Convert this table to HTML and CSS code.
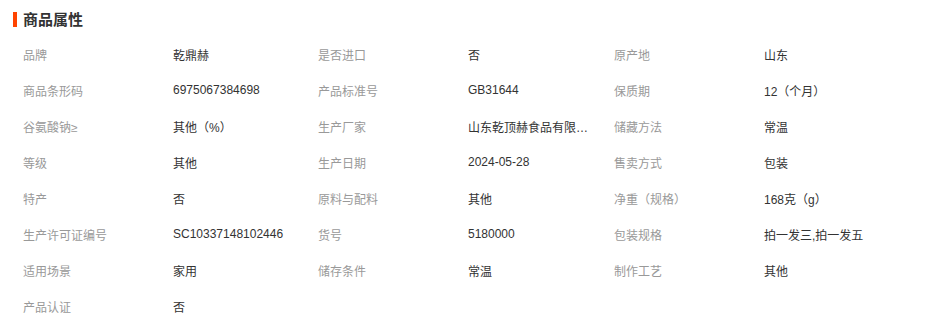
FILE: index.html
```html
<!DOCTYPE html>
<html lang="zh-CN">
<head>
<meta charset="utf-8">
<link rel="stylesheet" href="styles.css">
</head>
<body>
<section class="attrs">
  <h2 class="attrs-title">商品属性</h2>
  <div class="attrs-grid">
    <div class="label">品牌</div><div class="value">乾鼎赫</div>
    <div class="label">是否进口</div><div class="value">否</div>
    <div class="label">原产地</div><div class="value">山东</div>

    <div class="label">商品条形码</div><div class="value">6975067384698</div>
    <div class="label">产品标准号</div><div class="value">GB31644</div>
    <div class="label">保质期</div><div class="value">12（个月）</div>

    <div class="label">谷氨酸钠≥</div><div class="value">其他（%）</div>
    <div class="label">生产厂家</div><div class="value" title="山东乾顶赫食品有限公司">山东乾顶赫食品有限公司</div>
    <div class="label">储藏方法</div><div class="value">常温</div>

    <div class="label">等级</div><div class="value">其他</div>
    <div class="label">生产日期</div><div class="value">2024-05-28</div>
    <div class="label">售卖方式</div><div class="value">包装</div>

    <div class="label">特产</div><div class="value">否</div>
    <div class="label">原料与配料</div><div class="value">其他</div>
    <div class="label">净重（规格）</div><div class="value">168克（g）</div>

    <div class="label">生产许可证编号</div><div class="value">SC10337148102446</div>
    <div class="label">货号</div><div class="value">5180000</div>
    <div class="label">包装规格</div><div class="value">拍一发三,拍一发五</div>

    <div class="label">适用场景</div><div class="value">家用</div>
    <div class="label">储存条件</div><div class="value">常温</div>
    <div class="label">制作工艺</div><div class="value">其他</div>

    <div class="label">产品认证</div><div class="value">否</div>
  </div>
</section>
</body>
</html>
```

FILE: styles.css
```css
html, body {
  margin: 0;
  padding: 0;
  background: #fff;
}
body {
  font-family: "Liberation Sans", "Noto Sans CJK SC", sans-serif;
  font-size: 12px;
  color: #333;
}
.attrs {
  padding: 10px 0 0 13px;
}
.attrs-title {
  margin: 0;
  font-size: 15px;
  line-height: 20px;
  font-weight: bold;
  color: #333;
  border-left: 4px solid #ff4400;
  padding-left: 6px;
  height: 20px;
  display: flex;
  align-items: center;
  border-image: linear-gradient(to bottom, transparent 3px, #ff4400 3px, #ff4400 16px, transparent 16px) 1;
}
.attrs-grid {
  margin-top: 6px;
  padding-left: 10px;
  display: grid;
  grid-template-columns: 150px 145px 150px 146px 150px 140px;
  grid-auto-rows: 36px;
  align-items: center;
}
.label {
  color: #999;
  white-space: nowrap;
}
.value {
  color: #333;
  white-space: nowrap;
  overflow: hidden;
  text-overflow: ellipsis;
  max-width: 122px;
}
```
